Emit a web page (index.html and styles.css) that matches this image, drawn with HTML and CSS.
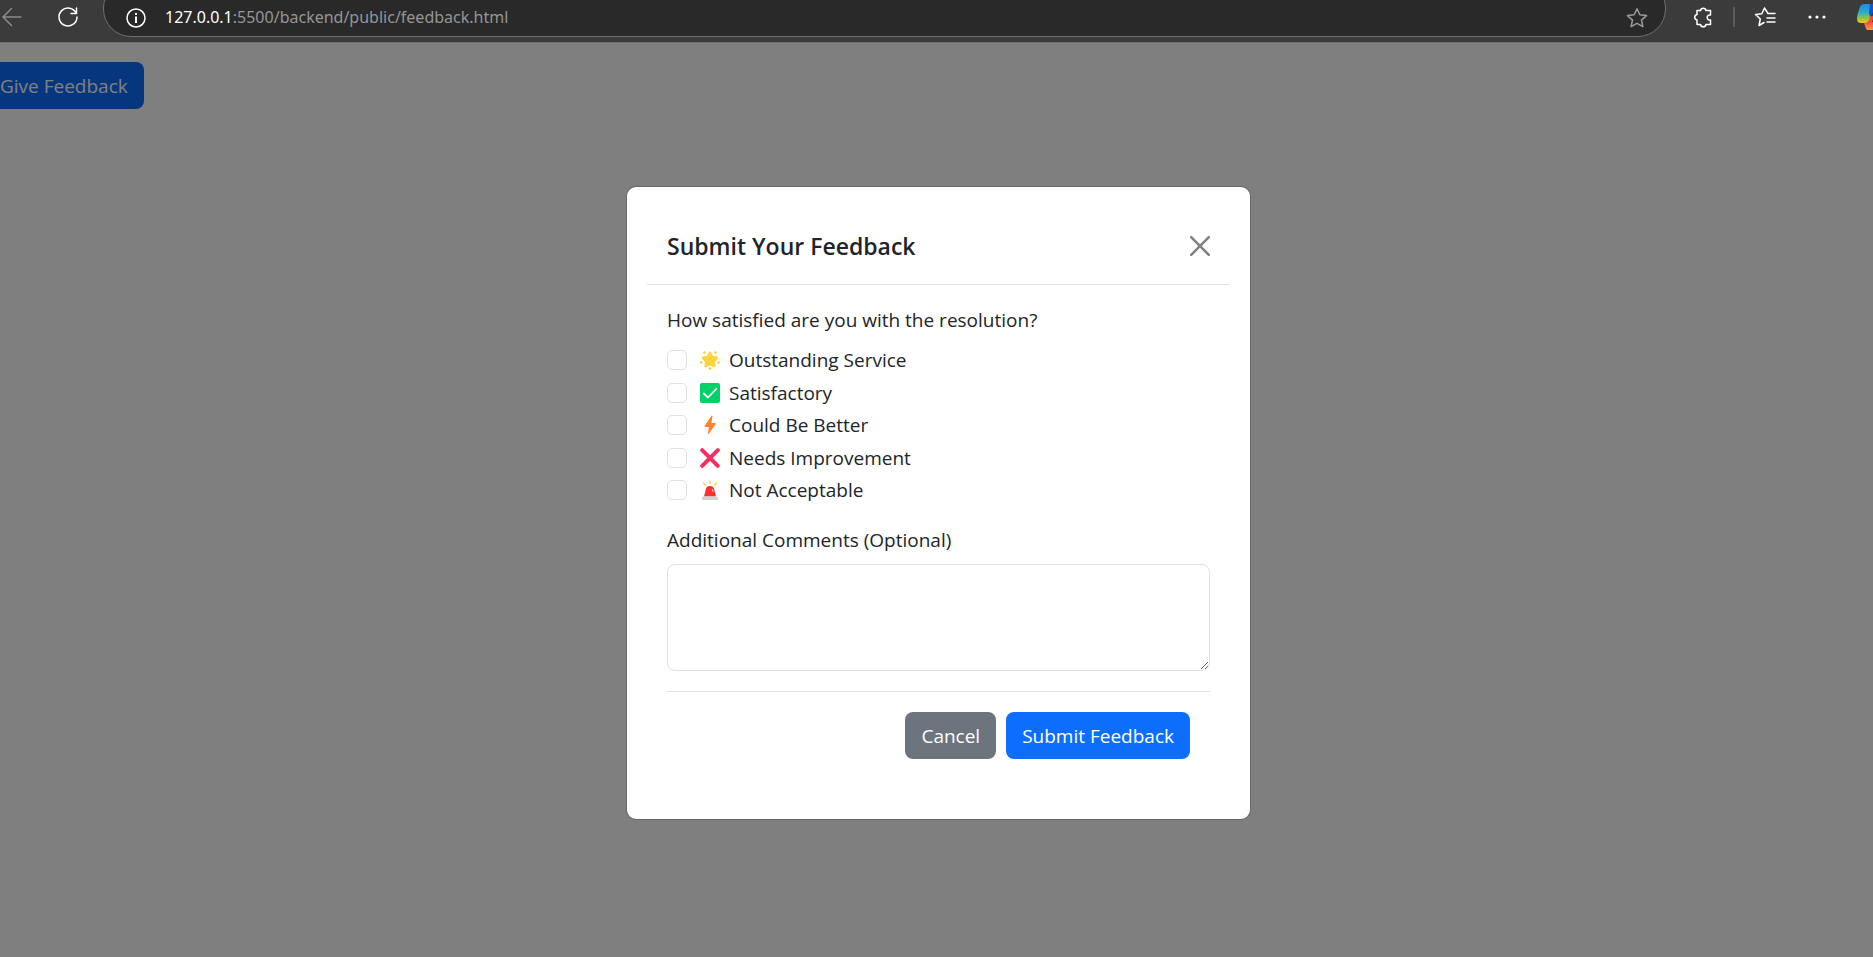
FILE: index.html
```html
<!DOCTYPE html>
<html lang="en">
<head>
<meta charset="utf-8">
<title>Feedback</title>
<link rel="stylesheet" href="styles.css">
</head>
<body>
<header class="toolbar">
  <button class="tool tool-back" type="button" aria-label="Back">
    <svg width="24" height="24" viewBox="0 0 24 24"><path d="M21 12H3M11.500 3.500 3 12l8.500 8.500"/></svg>
  </button>
  <button class="tool tool-reload" type="button" aria-label="Reload">
    <svg width="24" height="24" viewBox="0 0 24 24"><path d="M20.300 8.500A9 9 0 1 0 21 12M20.500 3v5.500H15"/></svg>
  </button>
  <div class="address">
    <button class="tool" type="button" aria-label="Site information">
      <svg width="24" height="24" viewBox="0 0 24 24"><circle cx="12" cy="12" r="9"/><path class="thick" d="M12 10.500v6.500M12 7v2"/></svg>
    </button>
    <div class="url"><span class="host">127.0.0.1</span>:5500/backend/public/feedback.html</div>
    <button class="tool tool-star" type="button" aria-label="Add to favorites">
      <svg width="24" height="24" viewBox="0 0 24 24"><path d="m12 2.800 2.800 6 6.700.8-5 4.500 1.400 6.500-5.900-3.300-5.900 3.300 1.400-6.500-5-4.500 6.700-.8z"/></svg>
    </button>
  </div>
  <div class="tools">
    <button class="tool" type="button" aria-label="Extensions">
      <svg width="24" height="24" viewBox="0 0 24 24"><path d="M6 5.500h3.500a2.800 2.800 0 0 1 5.500 0h4.500v4.500a2.600 2.600 0 1 0 0 5v4.500H15a2.800 2.800 0 0 1-5.500 0H6V15a2.800 2.800 0 0 1 0-5.500z"/></svg>
    </button>
    <span class="divider"></span>
    <button class="tool" type="button" aria-label="Favorites">
      <svg width="24" height="24" viewBox="0 0 24 24"><path d="M22 8.500h-7L11.500 3 8.800 8.800l-6.300.7 4.800 4.500L6 20.500l5-3M14 13h8M14 17h8"/></svg>
    </button>
    <button class="tool tool-more" type="button" aria-label="More">
      <svg class="dots" width="24" height="24" viewBox="0 0 24 24"><circle cx="5" cy="12" r="1.600"/><circle cx="12" cy="12" r="1.600"/><circle cx="19" cy="12" r="1.600"/></svg>
    </button>
    <button class="tool tool-copilot" type="button" aria-label="Copilot">
      <svg class="copilot" width="30" height="26" viewBox="0 0 30 26">
        <defs>
          <linearGradient id="blue" x1="0" y1="0" x2="0" y2="1"><stop offset="0" stop-color="#1b8fe8"/><stop offset=".4" stop-color="#22a8d8"/><stop offset=".7" stop-color="#7fc450"/><stop offset="1" stop-color="#f5c60c"/></linearGradient>
          <linearGradient id="warm" x1="0" y1="0" x2="0" y2="1"><stop offset="0" stop-color="#e8452c"/><stop offset=".5" stop-color="#f2553c"/><stop offset="1" stop-color="#ff9a48"/></linearGradient>
        </defs>
        <path fill="url(#warm)" d="M6 18.500c4 0 5-2 6-6.500h5l-2 6h11c-1 5-3 8-8 8h-7c-3 0-3-7.500-5-7.500z"/>
        <path fill="url(#blue)" d="M8 0h12l-5 8-2 5c-1 4-3 6-6 6H4c-3 0-4-2-4-5 0-3 2-8 3-11 1-2 2-3 5-3z"/>
        <path fill="#1b4fc4" d="M13 0h8l-3 9h-3l-2 4-1-4z"/>
      </svg>
    </button>
  </div>
</header>

<main class="page">
  <button class="btn btn-primary btn-open" type="button">Give Feedback</button>
  <div class="backdrop">
    <section class="modal" role="dialog" aria-modal="true" aria-labelledby="modal-title">
      <div class="modal-header">
        <h5 class="modal-title" id="modal-title">Submit Your Feedback</h5>
        <button class="close" type="button" aria-label="Close">
          <svg width="20" height="20" viewBox="0 0 20 20"><path d="m1.200 1.200 17.600 17.600M18.800 1.200 1.200 18.800"/></svg>
        </button>
      </div>
      <form class="modal-body">
        <fieldset class="rating">
          <legend>How satisfied are you with the resolution?</legend>
          <div class="options">
          <label class="check"><input type="checkbox" name="rating">
            <svg width="20" height="20" viewBox="0 0 20 20"><path fill="#fdd43c" stroke="#fdd43c" stroke-width="2.500" stroke-linejoin="round" d="m10 2.800 2.300 4.200 4.700.8-3.300 3.500.7 4.700-4.400-2-4.400 2 .7-4.700L3 7.800 7.700 7z"/><g fill="#fdc93c"><circle cx="4.500" cy="2.500" r="1.200"/><circle cx="15.500" cy="2.500" r="1.200"/><circle cx="1.300" cy="12.500" r="1.300"/><circle cx="18.700" cy="12.500" r="1.300"/><circle cx="10" cy="18.600" r="1.400"/></g></svg>
            Outstanding Service</label>
          <label class="check"><input type="checkbox" name="rating">
            <svg width="20" height="20" viewBox="0 0 20 20"><rect width="20" height="20" rx="2" fill="#00d26a"/><path fill="none" stroke="#fff" stroke-width="1.800" stroke-linecap="round" stroke-linejoin="round" d="m3.800 10.500 4.200 4 8.200-8.500"/></svg>
            Satisfactory</label>
          <label class="check"><input type="checkbox" name="rating">
            <svg width="20" height="20" viewBox="0 0 20 20"><path fill="#ff822d" d="M11.500.7c.5-.5 1 0 .9.600L11.500 8h3.300c.8 0 1 .6.600 1.200L9 18.700c-.4.600-1.100.3-1-.4L9 12H5.300c-.7 0-1-.6-.6-1.200z"/></svg>
            Could Be Better</label>
          <label class="check"><input type="checkbox" name="rating">
            <svg width="20" height="20" viewBox="0 0 20 20"><path fill="none" stroke="#f92f60" stroke-width="4" stroke-linecap="round" d="m2.200 2.200 15.600 15.600M17.800 2.200 2.200 17.800"/></svg>
            Needs Improvement</label>
          <label class="check"><input type="checkbox" name="rating">
            <svg width="20" height="20" viewBox="0 0 20 20"><path fill="none" stroke="#fcd53f" stroke-width="1.300" stroke-linecap="round" d="M10 .8v2.700M3.500 3l2 2.300M16.500 3l-2 2.300"/><path fill="#f8312f" d="M4 16.500 6 8.500C6.400 6.800 8 6 10 6s3.600.8 4 2.500l2 8z"/><path fill="none" stroke="#fff" stroke-opacity=".7" d="m12.300 9 .8 3"/><rect x="2" y="16.500" width="16" height="3.500" rx="1" fill="#d3d3d3"/></svg>
            Not Acceptable</label>
          </div>
        </fieldset>
        <div class="comments">
          <label for="comments">Additional Comments (Optional)</label>
          <textarea id="comments" rows="3"></textarea>
        </div>
        <div class="modal-footer">
          <button class="btn btn-secondary" type="button">Cancel</button>
          <button class="btn btn-primary" type="submit">Submit Feedback</button>
        </div>
      </form>
    </section>
  </div>
</main>
</body>
</html>
```
FILE: styles.css
```css
* { box-sizing: border-box; }

body {
  margin: 0;
  min-height: 100vh;
  display: flex;
  flex-direction: column;
  background: #fff;
  color: #212529;
  font: 19px/30px "Segoe UI", "Open Sans", "Noto Sans", sans-serif;
}

button, textarea { font: inherit; }

/* Browser toolbar */
.toolbar {
  display: flex;
  height: 43px;
  background: #3b3b3b;
  border-bottom: 1px solid #6e6e6e;
  overflow: hidden;
}

.tool {
  flex: none;
  height: 34px;
  padding: 0;
  border: 0;
  background: none;
  color: #fff;
}

.tool svg {
  display: block;
  fill: none;
  stroke: currentColor;
  stroke-width: 1.5;
  stroke-linecap: round;
  stroke-linejoin: round;
}

.tool .thick { stroke-width: 2; stroke-linecap: butt; }
.tool .dots { fill: currentColor; stroke: none; }
.tool .copilot { stroke: none; }
.tool-back { color: #8b8b8b; }
.tool-reload { margin-left: 32px; }
.tool-star { color: #9a9a9a; }

.address {
  flex: 1;
  display: flex;
  height: 57px;
  margin: -20px 25px 0 23px;
  padding: 20px 16px 0 20px;
  border: 1px solid #707070;
  border-radius: 28px;
  background: #292929;
}

.url {
  flex: 1;
  padding-left: 17px;
  color: #969696;
  font-family: "Segoe UI", "Noto Sans", "Open Sans", sans-serif;
  font-size: 16px;
  line-height: 32px;
}

.host { color: #fff; }

.tools { display: flex; gap: 18px; }
.tool-more, .tool-copilot { margin-left: 10px; }

.divider {
  width: 2px;
  height: 20px;
  margin-top: 7px;
  background: #5b5b5b;
}

.tool-copilot { width: 16px; overflow: hidden; }

/* Page */
.page { flex: 1; position: relative; padding-top: 19px; }

.btn {
  height: 47px;
  padding: 0 16px;
  border: 0;
  border-radius: 8px;
  color: #fff;
}

.btn-primary { background: #0d6efd; }
.btn-secondary { background: #6c757d; }

.btn-open {
  display: block;
  padding-left: 0;
  border-radius: 0 8px 8px 0;
}

.backdrop {
  position: absolute;
  inset: 0;
  display: flex;
  justify-content: center;
  align-items: flex-start;
  padding: 143px 0 40px 4px;
  background: rgba(0, 0, 0, .5);
}

.modal {
  width: 625px;
  padding: 20px;
  border: 1px solid rgba(0, 0, 0, .175);
  border-radius: 10px;
  background: #fff;
  background-clip: padding-box;
}

.modal-header {
  display: flex;
  justify-content: space-between;
  align-items: center;
  height: 78px;
  padding: 0 20px;
  border-bottom: 1px solid #dee2e6;
}

.modal-title {
  margin: 0;
  font-size: 23px;
  font-weight: 600;
}

.close {
  padding: 0;
  border: 0;
  background: none;
  color: #808080;
}

.close svg {
  display: block;
  fill: none;
  stroke: currentColor;
  stroke-width: 2.5;
  stroke-linecap: round;
}

.modal-body { padding: 20px; }

.rating {
  margin: 0 0 20px;
  padding: 0;
  border: 0;
}

.rating legend { padding: 0; margin-bottom: 10px; }

.options {
  display: flex;
  flex-direction: column;
  justify-content: space-between;
  height: 160px;
}

.check {
  display: flex;
  align-items: center;
  height: 30px;
}

.check input {
  appearance: none;
  width: 20px;
  height: 20px;
  margin: 0 13px 0 0;
  border: 1px solid #dee2e6;
  border-radius: 5px;
}

.check svg { margin-right: 9px; }

.comments { display: flex; flex-direction: column; gap: 9px; }

.comments textarea {
  width: 100%;
  height: 107px;
  padding: 7px 15px;
  border: 1px solid #dee2e6;
  border-radius: 8px;
  background: #fff;
  resize: vertical;
}

.modal-footer {
  display: flex;
  justify-content: flex-end;
  gap: 10px;
  margin-top: 20px;
  padding: 20px;
  border-top: 1px solid #dee2e6;
}
```
